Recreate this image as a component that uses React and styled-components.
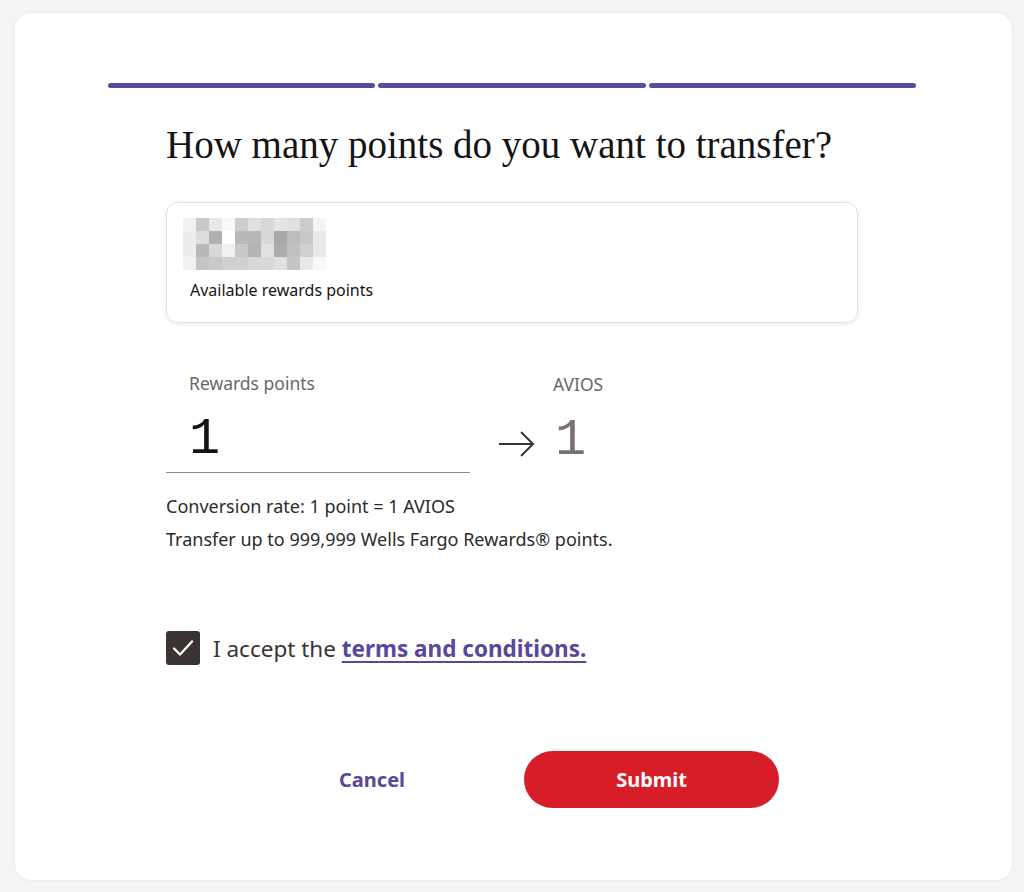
import React from 'react'
import styled, { createGlobalStyle } from 'styled-components'

const GlobalStyle = createGlobalStyle`
  html, body {
    margin: 0;
    padding: 0;
    background: #f4f4f4;
  }
  body {
    font-family: "Noto Sans", "Open Sans", sans-serif;
    color: #141414;
  }
`

const Page = styled.div`
  padding: 13px 12px 12px 15px;
`

const Card = styled.main`
  background: #fff;
  border-radius: 16px;
  box-shadow: 0 0 3px rgba(0, 0, 0, 0.08);
  height: 867px;
  box-sizing: border-box;
  padding-top: 70px;
  display: flex;
  flex-direction: column;
  align-items: center;
`

const Steps = styled.div`
  display: flex;
  gap: 3px;
  width: 808px;
  margin-left: -3px;
`

const Step = styled.div`
  flex: 1;
  height: 5px;
  border-radius: 3px;
  background: #5a4a9b;
`

const Body = styled.div`
  width: 692px;
  margin-left: -3px;
`

const Title = styled.h1`
  font-family: "Liberation Serif", "DejaVu Serif", serif;
  font-weight: 400;
  font-size: 39px;
  line-height: 44px;
  margin: 35px 0 35px;
  color: #141414;
`

const Balance = styled.section`
  border: 1px solid #e2e2e2;
  border-radius: 12px;
  box-shadow: 0 1px 4px rgba(0, 0, 0, 0.1);
  height: 121px;
  box-sizing: border-box;
  padding: 15px 16px;
`

const Mosaic = styled.div`
  display: grid;
  grid-template-columns: repeat(11, 13px);
  grid-auto-rows: 13px;
  width: 140px;
  filter: blur(0.6px);
`

const Tile = styled.div`
  background: ${p => p.$c};
`

const BalanceLabel = styled.div`
  font-size: 16px;
  line-height: 22px;
  margin: 9px 0 0 7px;
`

const Convert = styled.div`
  display: flex;
  align-items: flex-end;
  margin-top: 49px;
`

const Field = styled.div`
  width: 304px;
  box-sizing: border-box;
  border-bottom: 1px solid #8a8a8a;
  padding: 0 0 6px 23px;
`

const Label = styled.div`
  font-size: 17.5px;
  color: #6e6664;
  line-height: 22px;
`

const Amount = styled.div`
  font-family: "Liberation Mono", "DejaVu Sans Mono", monospace;
  font-size: 52px;
  line-height: 52px;
  margin-top: 20px;
  margin-left: ${p => (p.$muted ? '2px' : '0')};
  color: ${p => (p.$muted ? '#7a7270' : '#141414')};
`

const Arrow = styled.svg`
  width: 38px;
  height: 30px;
  margin: 0 17px 14px 28px;
`

const Result = styled.div`
  padding-bottom: 6px;
`

const Note = styled.p`
  font-size: 18px;
  line-height: 24px;
  margin: 0;
  color: #2b2b2b;
  & + & {
    margin-top: 9px;
  }
`

const Notes = styled.div`
  margin-top: 21px;
`

const Accept = styled.label`
  display: flex;
  align-items: center;
  gap: 13px;
  margin-top: 80px;
  font-size: 22.5px;
  color: #3b3331;
`

const Box = styled.span`
  width: 34px;
  height: 34px;
  border-radius: 3px;
  background: #3b3331;
  display: flex;
  align-items: center;
  justify-content: center;
`

const Link = styled.a`
  color: #5a469b;
  font-weight: 700;
  text-decoration: underline;
  text-underline-offset: 4px;
  text-decoration-thickness: 2px;
`

const Actions = styled.div`
  display: flex;
  align-items: center;
  gap: 119px;
  margin-top: 86px;
  padding-left: 173px;
`

const TextButton = styled.button`
  border: 0;
  background: none;
  font-family: inherit;
  font-weight: 700;
  font-size: 20px;
  color: #5a469b;
  padding: 0;
`

const Primary = styled.button`
  border: 0;
  width: 255px;
  height: 57px;
  border-radius: 29px;
  background: #d71e28;
  color: #fff;
  font-family: inherit;
  font-weight: 700;
  font-size: 20px;
`

const tiles = [
  'f0f0f0 c8c8c8 e8e8e8 f8f8f8 cccccc e0e0e0 d8d8d8 e4e4e4 e0e0e0 cccccc f4f4f4',
  'ececec dcdcdc b0b0b0 ffffff b8b8b8 b8b8b8 d8d8d8 a8a8a8 bcbcbc c8c8c8 e8e8e8',
  'ececec b8b8b8 d8d8d8 f0f0f0 c8c8c8 b4b4b4 e0e0e0 acacac c0c0c0 d0d0d0 e8e8e8',
  'f0f0f0 c4c4c4 c8c8c8 d0d0d0 d0d0d0 d8d8d8 d8d8d8 e0e0e0 c4c4c4 e8e8e8 f8f8f8',
].join(' ').split(' ')

export default function App() {
  return (
    <Page>
      <GlobalStyle />
      <Card>
        <Steps>
          <Step />
          <Step />
          <Step />
        </Steps>
        <Body>
          <Title>How many points do you want to transfer?</Title>

          <Balance>
            <Mosaic>
              {tiles.map((c, i) => (
                <Tile key={i} $c={'#' + c} />
              ))}
            </Mosaic>
            <BalanceLabel>Available rewards points</BalanceLabel>
          </Balance>

          <Convert>
            <Field>
              <Label>Rewards points</Label>
              <Amount>1</Amount>
            </Field>
            <Arrow viewBox="0 0 38 30" fill="none" stroke="#3b3331" strokeWidth="2">
              <path d="M1 15h34M23 3l12 12-12 12" />
            </Arrow>
            <Result>
              <Label>AVIOS</Label>
              <Amount $muted>1</Amount>
            </Result>
          </Convert>

          <Notes>
            <Note>Conversion rate: 1 point = 1 AVIOS</Note>
            <Note>Transfer up to 999,999 Wells Fargo Rewards® points.</Note>
          </Notes>

          <Accept>
            <Box>
              <svg width="22" height="18" viewBox="0 0 22 18" fill="none" stroke="#fff" strokeWidth="2.4" strokeLinecap="round" strokeLinejoin="round">
                <path d="M2 9.5l6 6L20 2.5" />
              </svg>
            </Box>
            <span>
              I accept the <Link href="#">terms and conditions.</Link>
            </span>
          </Accept>

          <Actions>
            <TextButton>Cancel</TextButton>
            <Primary>Submit</Primary>
          </Actions>
        </Body>
      </Card>
    </Page>
  )
}
